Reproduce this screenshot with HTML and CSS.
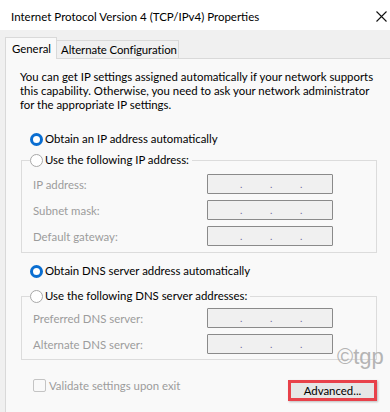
FILE: index.html
```html
<!DOCTYPE html>
<html lang="en">
<head>
    <meta charset="UTF-8">
    <meta name="viewport" content="width=device-width, initial-scale=1.0">
    <title>Internet Protocol Version 4 (TCP/IPv4) Properties</title>
    <link rel="stylesheet" href="styles.css">
</head>
<body>
    <div class="dialog">
        <div class="titlebar">
            <span class="title">Internet Protocol Version 4 (TCP/IPv4) Properties</span>
            <svg class="close" width="11" height="11" viewBox="0 0 11 11">
                <path d="M0.5 0.5 L10.5 10.5 M10.5 0.5 L0.5 10.5" stroke="#111" stroke-width="1.1" fill="none"/>
            </svg>
        </div>
        <div class="tabs">
            <div class="tab active">General</div>
            <div class="tab">Alternate Configuration</div>
        </div>
        <div class="panel">
            <p class="intro">You can get IP settings assigned automatically if your network supports<br>this capability. Otherwise, you need to ask your network administrator<br>for the appropriate IP settings.</p>

            <div class="option first">
                <span class="radio checked"></span>
                <span>Obtain an IP address automatically</span>
            </div>
            <fieldset class="group ip-group">
                <legend class="option">
                    <span class="radio"></span>
                    <span>Use the following IP address:</span>
                </legend>
                <div class="field">
                    <span class="label">IP address:</span>
                    <div class="ipbox"><span class="seg"></span><span class="dot">.</span><span class="seg"></span><span class="dot">.</span><span class="seg"></span><span class="dot">.</span><span class="seg"></span></div>
                </div>
                <div class="field">
                    <span class="label">Subnet mask:</span>
                    <div class="ipbox"><span class="seg"></span><span class="dot">.</span><span class="seg"></span><span class="dot">.</span><span class="seg"></span><span class="dot">.</span><span class="seg"></span></div>
                </div>
                <div class="field">
                    <span class="label">Default gateway:</span>
                    <div class="ipbox"><span class="seg"></span><span class="dot">.</span><span class="seg"></span><span class="dot">.</span><span class="seg"></span><span class="dot">.</span><span class="seg"></span></div>
                </div>
            </fieldset>

            <div class="option dns-auto">
                <span class="radio checked"></span>
                <span>Obtain DNS server address automatically</span>
            </div>
            <fieldset class="group dns-group">
                <legend class="option">
                    <span class="radio"></span>
                    <span>Use the following DNS server addresses:</span>
                </legend>
                <div class="field">
                    <span class="label">Preferred DNS server:</span>
                    <div class="ipbox"><span class="seg"></span><span class="dot">.</span><span class="seg"></span><span class="dot">.</span><span class="seg"></span><span class="dot">.</span><span class="seg"></span></div>
                </div>
                <div class="field">
                    <span class="label">Alternate DNS server:</span>
                    <div class="ipbox"><span class="seg"></span><span class="dot">.</span><span class="seg"></span><span class="dot">.</span><span class="seg"></span><span class="dot">.</span><span class="seg"></span></div>
                </div>
            </fieldset>

            <div class="footer">
                <div class="validate">
                    <span class="checkbox"></span>
                    <span>Validate settings upon exit</span>
                </div>
                <div class="highlight">
                    <button class="advanced">Advanced...</button>
                </div>
            </div>
            <span class="watermark">&copy;tgp</span>
        </div>
    </div>
</body>
</html>
```

FILE: styles.css
```css
body {
    margin: 0;
    padding: 0;
    background-color: #f0f0f0;
    font-family: Lato, "Open Sans", sans-serif;
    font-size: 11.4px;
    color: #000;
}
.dialog {
    width: 390px;
    height: 412px;
    overflow: hidden;
}
.titlebar {
    height: 30px;
    background-color: #ffffff;
    display: flex;
    align-items: center;
    justify-content: space-between;
    padding: 2px 2px 0 11px;
    box-sizing: border-box;
    font-size: 11.5px;
}
.close {
    margin-right: 1px;
}
.tabs {
    height: 28px;
    display: flex;
    align-items: flex-end;
    padding-left: 5px;
    box-sizing: border-box;
}
.tab {
    height: 17px;
    padding: 0 1px 0 4px;
    border: 1px solid #d9d9d9;
    border-bottom: none;
    background-color: #f0f0f0;
    line-height: 17px;
    margin-left: -1px;
    letter-spacing: -0.1px;
}
.tab.active {
    height: 21px;
    line-height: 21px;
    padding: 0 5px 0 6px;
    background-color: #f9f9f9;
    margin-left: 0;
    margin-bottom: -1px;
    position: relative;
    z-index: 1;
    letter-spacing: 0;
}
.panel {
    position: relative;
    margin-left: 5px;
    height: 354px;
    border-top: 1px solid #d9d9d9;
    border-left: 1px solid #d9d9d9;
    background-color: #f9f9f9;
    padding-left: 14px;
    box-sizing: border-box;
}
.intro {
    margin: 0;
    padding-top: 11px;
    line-height: 14px;
    white-space: nowrap;
}
.option {
    display: flex;
    align-items: center;
    height: 14px;
    line-height: 14px;
}
.option.first {
    margin: 20px 0 0 10px;
}
.radio {
    width: 13px;
    height: 13px;
    box-sizing: border-box;
    border: 1px solid #a8a8a8;
    border-radius: 50%;
    background-color: #ffffff;
    margin-right: 2px;
}
.radio.checked {
    border: 3px solid #0a6ed1;
}
.group {
    width: 356px;
    box-sizing: border-box;
    margin: 7px 0 0 1px;
    padding: 0 0 6px 8px;
    border: 1px solid #dcdcdc;
}
.group legend {
    padding: 0 3px 0 0;
}
.field {
    display: flex;
    align-items: center;
    margin-top: 6px;
    padding-left: 3px;
}
.ip-group .field:first-of-type {
    margin-top: 7px;
}
.dns-group .field:first-of-type {
    margin-top: 5px;
}
.dns-group {
    padding-bottom: 5px;
}
.label {
    width: 174px;
    color: #9c9c9c;
}
.ipbox {
    width: 126px;
    height: 20px;
    box-sizing: border-box;
    border: 1px solid #8a8a8a;
    border-radius: 1px;
    background-color: #f0f0f0;
    display: flex;
    align-items: center;
    padding-left: 3px;
}
.seg {
    width: 29px;
}
.dot {
    width: 1px;
    color: #6d6d9d;
    font-size: 10px;
    line-height: 10px;
}
.dns-auto {
    margin: 11px 0 0 10px;
}
.dns-group {
    margin-top: 11px;
}
.footer {
    display: flex;
    justify-content: space-between;
    align-items: flex-start;
    width: 357px;
    margin-top: 18px;
}
.validate {
    display: flex;
    align-items: center;
    margin-left: 13px;
    color: #9c9c9c;
    height: 14px;
}
.checkbox {
    width: 13px;
    height: 13px;
    box-sizing: border-box;
    border: 1px solid #c4c4c4;
    border-radius: 2px;
    background-color: #f9f9f9;
    margin-right: 3px;
}
.highlight {
    margin-top: 2px;
    border: 3px solid #e8414a;
    width: 89px;
    height: 21px;
    box-sizing: border-box;
    box-shadow: 1px 1px 2px rgba(0, 0, 0, 0.25);
}
.advanced {
    display: block;
    width: 100%;
    height: 100%;
    border: none;
    padding: 0;
    background-color: #e6e6e6;
    font-family: inherit;
    font-size: 11.4px;
    color: #000;
    line-height: 15px;
}
.watermark {
    position: absolute;
    left: 331px;
    top: 285px;
    font-family: "Liberation Sans", Arial, sans-serif;
    font-size: 22px;
    color: #b4b4b4;
}
```
